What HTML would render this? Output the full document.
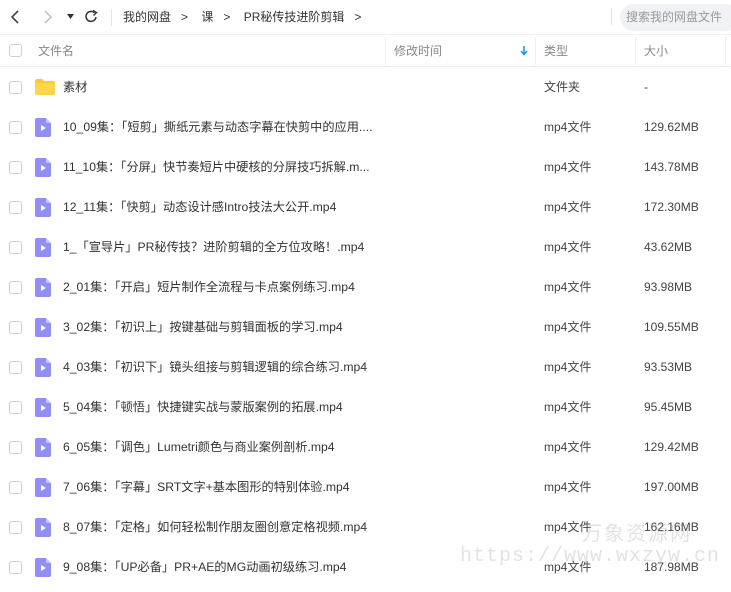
<!DOCTYPE html>
<html><head><meta charset="utf-8"><style>
*{margin:0;padding:0;box-sizing:border-box}
body{width:731px;height:592px;overflow:hidden;background:#fff;font-family:"Liberation Sans","Noto Sans CJK SC",sans-serif;font-size:12px;line-height:16px;color:#333;position:relative}
.top{position:absolute;left:0;top:0;width:731px;height:35px;border-bottom:1px solid #f0f0f0}
.a{position:absolute;white-space:nowrap}
.hdr{position:absolute;top:35px;left:0;width:731px;height:32px;border-bottom:1px solid #f0f0f0;color:#888}
.cb{position:absolute;left:9px;width:13px;height:13px;border:1px solid #d0d0d0;border-radius:3px;background:#fff}
.row{position:absolute;left:0;width:731px;height:40px}
.row .n{position:absolute;left:63px;top:12px;white-space:nowrap;color:#333;font-size:12.2px}
.row .t{position:absolute;left:544px;top:12px;color:#444}
.row .s{position:absolute;left:644px;top:12px;color:#444}
.fi{position:absolute;left:35px;top:11px;width:16px;height:19px}
.vl{position:absolute;top:37px;width:1px;height:28px;background:#eee}
</style></head><body>
<div class="top">
<svg class="a" style="left:10px;top:10px" width="12" height="14"><path d="M8 1L2 7L8 13" stroke="#444" stroke-width="1.6" fill="none"/></svg>
<svg class="a" style="left:42px;top:10px" width="12" height="14"><path d="M3 1L9 7L3 13" stroke="#bbb" stroke-width="1.4" fill="none"/></svg>
<svg class="a" style="left:67px;top:14px" width="8" height="6"><path d="M0 0H7L3.5 5Z" fill="#333"/></svg>
<svg class="a" style="left:84px;top:9px" width="15" height="15"><path d="M12 8A5 5 0 1 1 10.5 3.8" stroke="#333" stroke-width="1.5" fill="none"/><path d="M9 1.5L12.5 3.5L9.5 6.5" stroke="#333" stroke-width="1.4" fill="none"/></svg>
<div class="a" style="left:111px;top:9px;width:1px;height:17px;background:#e5e5e5"></div>
<div class="a" style="left:123px;top:9px;color:#333">我的网盘 &nbsp;&nbsp;&gt;&nbsp;&nbsp;&nbsp; 课 &nbsp;&nbsp;&gt;&nbsp;&nbsp;&nbsp; PR秘传技进阶剪辑 &nbsp;&nbsp;&gt;</div>
<div class="a" style="left:611px;top:8px;width:1px;height:17px;background:#e5e5e5"></div>
<div class="a" style="left:620px;top:4px;width:120px;height:27px;background:#f1f2f5;border-radius:14px;color:#999;padding:5px 0 0 6px">搜索我的网盘文件</div>
</div>
<div class="hdr">
<div class="cb" style="top:9px"></div>
<div class="a" style="left:38px;top:8px">文件名</div>
<div class="a" style="left:394px;top:8px">修改时间</div>
<svg class="a" style="left:520px;top:11px" width="8" height="10"><path d="M4 0V8M1 5L4 8.5L7 5" stroke="#2196f3" stroke-width="1.6" fill="none"/></svg>
<div class="a" style="left:544px;top:8px">类型</div>
<div class="a" style="left:644px;top:8px">大小</div>
</div>
<div class="vl" style="left:385px"></div><div class="vl" style="left:535px"></div><div class="vl" style="left:635px"></div><div class="vl" style="left:725px"></div>
<div class="row" style="top:67px"><div class="cb" style="top:14px"></div>
<svg class="fi" style="top:12px;width:20px;height:16px" width="20" height="16"><path d="M0 2Q0 0 2 0H7L9 2H18Q20 2 20 4V14Q20 16 18 16H2Q0 16 0 14Z" fill="#ffc933"/><rect x="0" y="4" width="20" height="12" rx="1.5" fill="#ffd54a"/></svg>
<div class="n">素材</div><div class="t">文件夹</div><div class="s">-</div></div>

<div id="rows"></div>
<div class="a" style="left:460px;top:545px;font-family:'Liberation Mono',monospace;font-size:20px;line-height:24px;color:rgba(150,150,150,.28);letter-spacing:1px">https://www.wxzyw.cn</div>
<div class="a" style="left:582px;top:522px;font-size:20px;line-height:24px;color:rgba(150,150,150,.28);letter-spacing:2px">万象资源网</div>
<script>
var d=[["10_09集：「短剪」撕纸元素与动态字幕在快剪中的应用....","129.62MB"],["11_10集：「分屏」快节奏短片中硬核的分屏技巧拆解.m...","143.78MB"],["12_11集：「快剪」动态设计感Intro技法大公开.mp4","172.30MB"],["1_「宣导片」PR秘传技？进阶剪辑的全方位攻略！.mp4","43.62MB"],["2_01集：「开启」短片制作全流程与卡点案例练习.mp4","93.98MB"],["3_02集：「初识上」按键基础与剪辑面板的学习.mp4","109.55MB"],["4_03集：「初识下」镜头组接与剪辑逻辑的综合练习.mp4","93.53MB"],["5_04集：「顿悟」快捷键实战与蒙版案例的拓展.mp4","95.45MB"],["6_05集：「调色」Lumetri颜色与商业案例剖析.mp4","129.42MB"],["7_06集：「字幕」SRT文字+基本图形的特别体验.mp4","197.00MB"],["8_07集：「定格」如何轻松制作朋友圈创意定格视频.mp4","162.16MB"],["9_08集：「UP必备」PR+AE的MG动画初级练习.mp4","187.98MB"]];
var h="";d.forEach(function(r,i){h+='<div class="row" style="top:'+(107+i*40)+'px"><div class="cb" style="top:14px"></div><svg class="fi" width="16" height="19"><path d="M2 0H11L16 5V17Q16 19 14 19H2Q0 19 0 17V2Q0 0 2 0Z" fill="#8f8ff5"/><path d="M11 0V4Q11 5 12 5H16Z" fill="#c8c8fb"/><path d="M6 7L11 10L6 13Z" fill="#fff"/></svg><div class="n">'+r[0]+'</div><div class="t">mp4文件</div><div class="s">'+r[1]+'</div></div>'});
document.getElementById("rows").innerHTML=h;
</script>
</body></html>
